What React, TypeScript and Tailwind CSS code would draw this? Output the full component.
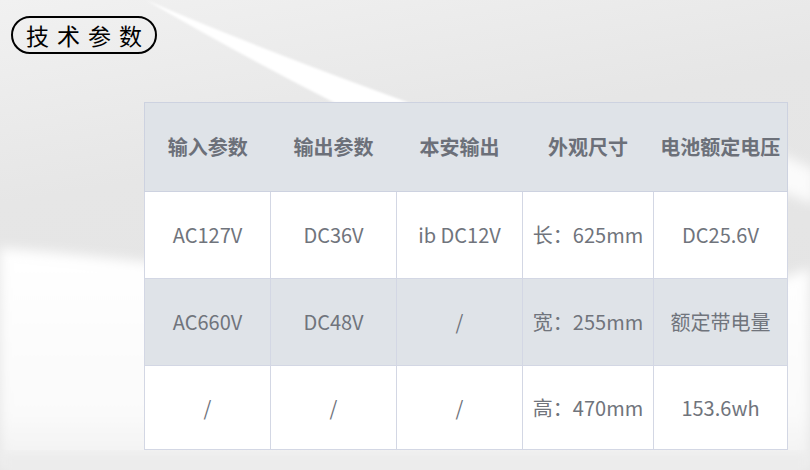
import React from "react";

const headers = ["输入参数", "输出参数", "本安输出", "外观尺寸", "电池额定电压"];

const rows = [
  ["AC127V", "DC36V", "ib DC12V", "长：625mm", "DC25.6V"],
  ["AC660V", "DC48V", "/", "宽：255mm", "额定带电量"],
  ["/", "/", "/", "高：470mm", "153.6wh"],
];

const widths = ["w-[126px]", "w-[126px]", "w-[126px]", "w-[131px]", "w-[134px]"];
const rowHeights = ["h-[87px]", "h-[87px]", "h-[84px]"];

function Backdrop() {
  return (
    <svg
      className="absolute inset-0 pointer-events-none"
      width="810"
      height="470"
      viewBox="0 0 810 470"
    >
      <defs>
        <linearGradient id="base" x1="0" y1="0" x2="0.3" y2="1">
          <stop offset="0" stopColor="#f1f1f1" />
          <stop offset="0.4" stopColor="#e6e6e6" />
          <stop offset="1" stopColor="#e4e4e4" />
        </linearGradient>
        <linearGradient id="low" x1="0" y1="0" x2="0" y2="1">
          <stop offset="0" stopColor="#ffffff" />
          <stop offset="0.75" stopColor="#fafafa" />
          <stop offset="1" stopColor="#f0f0f0" />
        </linearGradient>
        <filter id="soft" x="-10%" y="-10%" width="120%" height="120%">
          <feGaussianBlur stdDeviation="6" />
        </filter>
        <filter id="thin" x="-10%" y="-10%" width="120%" height="120%">
          <feGaussianBlur stdDeviation="0.8" />
        </filter>
      </defs>
      <rect width="810" height="470" fill="url(#base)" />
      <path
        d="M0,248 Q200,264 420,300 T810,268 L810,470 L0,470 Z"
        fill="url(#low)"
        filter="url(#soft)"
      />
      <path
        d="M770,150 Q795,160 815,170 L815,205 Q795,196 770,188 Z"
        fill="#fbfbfb"
        filter="url(#soft)"
      />
      <rect x="0" y="452" width="810" height="20" fill="#ececec" filter="url(#soft)" />
      <path
        d="M146,0 Q250,45 410,103 L335,103 Q235,52 146,0 Z"
        fill="#ffffff"
        filter="url(#thin)"
      />
    </svg>
  );
}

export default function App() {
  return (
    <div
      className="relative w-[810px] h-[470px] overflow-hidden bg-[#e9e9e9]"
      style={{ fontFamily: '"Noto Sans CJK SC", "Noto Sans", sans-serif' }}
    >
      <Backdrop />

      <div className="relative px-[11px] pt-[16px]">
        <div className="inline-flex items-center justify-center w-[146px] h-[38px] rounded-full border-2 border-black">
          <span className="text-[23px] leading-none font-normal text-black tracking-[8px] pl-[8px]">
            技术参数
          </span>
        </div>
      </div>

      <div className="relative mt-[48px] ml-[144px]">
        <table className="border-collapse border border-[#cdd2e0] text-center">
          <thead>
            <tr className="h-[89px] bg-[#dfe3e8]">
              {headers.map((h, i) => (
                <th
                  key={h}
                  className={`${widths[i]} p-0 text-[20px] font-bold text-[#6c7079] border-b border-[#cdd2e0]`}
                >
                  {h}
                </th>
              ))}
            </tr>
          </thead>
          <tbody>
            {rows.map((r, ri) => (
              <tr
                key={ri}
                className={`${rowHeights[ri]} ${ri === 1 ? "bg-[#dfe3e8]" : "bg-white"}`}
              >
                {r.map((c, ci) => (
                  <td
                    key={ci}
                    className={`${widths[ci]} p-0 text-[20px] font-normal text-[#70747c] border border-[#d3d7e4]`}
                  >
                    {c}
                  </td>
                ))}
              </tr>
            ))}
          </tbody>
        </table>
      </div>
    </div>
  );
}
